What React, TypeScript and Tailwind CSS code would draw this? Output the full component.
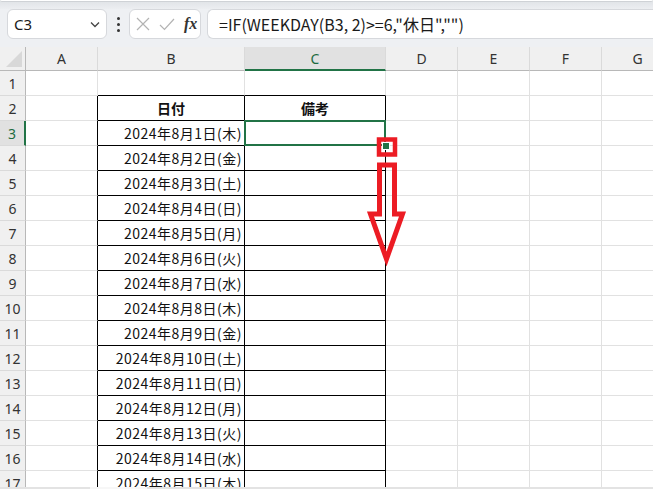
import React from 'react'

const colWidths = [26, 72, 147, 141, 72, 72, 72, 72]
const colNames = ['A', 'B', 'C', 'D', 'E', 'F', 'G']
const weekdays = ['木', '金', '土', '日', '月', '火', '水']

const jp = "font-['Noto_Sans_CJK_JP','Noto_Sans',sans-serif]"

function cellText(r: number, c: number) {
  if (r === 2 && c === 2) return '日付'
  if (r === 2 && c === 3) return '備考'
  if (r >= 3 && c === 2) {
    const d = r - 2
    return `2024年8月${d}日(${weekdays[(d - 1) % 7]})`
  }
  return ''
}

function Cell({ r, c }: { r: number; c: number }) {
  const inTable = r >= 2 && c <= 3
  const bottomBlack = r >= 1 && (c === 2 || c === 3)
  const text = cellText(r, c)
  const isHead = r === 2
  return (
    <div
      className={`relative h-[25px] border-r border-b flex items-center ${jp} text-[14px] text-[#111] ${
        inTable ? 'border-r-black' : 'border-r-[#e1e1e1]'
      } ${bottomBlack ? 'border-b-black' : 'border-b-[#e1e1e1]'} ${
        isHead ? 'justify-center font-bold' : 'justify-end pr-[2px] tracking-[0.5px]'
      } bg-white`}
    >
      <span className="whitespace-nowrap leading-none">{text}</span>
      {r === 3 && c === 3 && (
        <>
          <div className="absolute z-10 -left-px -top-px -right-px -bottom-px border-2 border-[#217346] pointer-events-none" />
          <div className="absolute z-10 right-[-5px] bottom-[-5px] w-[8px] h-[8px] bg-[#217346] border border-white" />
        </>
      )}
    </div>
  )
}

export default function App() {
  const rows = Array.from({ length: 17 }, (_, i) => i + 1)
  return (
    <div className="relative w-[653px] h-[489px] overflow-hidden bg-[#eef0f3]">
      {/* ribbon edge */}
      <div className="h-[9px] bg-gradient-to-b from-[#dfe2e6] to-[#eceef1]">
        <div className="h-[2px] bg-white border-b border-[#cfd2d6] rounded-b-[4px]" />
      </div>

      {/* formula bar */}
      <div className="flex items-stretch h-[30px] pl-[7px]">
        <div className="w-[100px] bg-white border border-[#d6d8dc] rounded-[6px] flex items-center justify-between pl-[6px] pr-[6px]">
          <span className="font-['Noto_Sans',sans-serif] text-[15px] text-[#1a1a1a]">C3</span>
          <svg width="10" height="7" viewBox="0 0 10 7">
            <path d="M1 1.5 L5 5.5 L9 1.5" fill="none" stroke="#444" strokeWidth="1.3" />
          </svg>
        </div>
        <div className="w-[22px] flex flex-col items-center justify-center gap-[3px]">
          <span className="w-[3px] h-[3px] rounded-full bg-[#333]" />
          <span className="w-[3px] h-[3px] rounded-full bg-[#333]" />
          <span className="w-[3px] h-[3px] rounded-full bg-[#333]" />
        </div>
        <div className="w-[72px] bg-white border border-[#d6d8dc] rounded-[6px] flex items-center pl-[6px] gap-[9px]">
          <svg width="14" height="14" viewBox="0 0 14 14">
            <path d="M1 1 L13 13 M13 1 L1 13" stroke="#b3b3b3" strokeWidth="1.2" fill="none" />
          </svg>
          <svg width="16" height="13" viewBox="0 0 16 13">
            <path d="M1 7 L5.5 11.5 L15 1" stroke="#b3b3b3" strokeWidth="1.2" fill="none" />
          </svg>
          <span className="font-['Liberation_Serif',serif] italic font-bold text-[16px] text-[#333] leading-none">
            fx
          </span>
        </div>
        <div className="flex-1 ml-[6px] bg-white border border-[#d6d8dc] border-r-0 rounded-l-[6px] flex items-center pl-[11px]">
          <span className={`${jp} text-[16px] text-[#1a1a1a] whitespace-nowrap`}>
            =IF(WEEKDAY(B3, 2)&gt;=6,"休日","")
          </span>
        </div>
      </div>

      <div className="h-[8px]" />

      {/* grid */}
      <div
        className="grid"
        style={{ gridTemplateColumns: colWidths.map((w) => `${w}px`).join(' ') }}
      >
        {/* header row */}
        <div className="h-[24px] bg-[#f0f0f0] border-r border-b border-r-[#b8b8b8] border-b-[#b8b8b8] flex items-end justify-end p-[3px]">
          <svg width="16" height="16" viewBox="0 0 16 16">
            <path d="M16 0 L16 16 L0 16 Z" fill="#d8d8d8" />
          </svg>
        </div>
        {colNames.map((n) => {
          const sel = n === 'C'
          return (
            <div
              key={n}
              className={`h-[24px] flex items-center justify-center border-r border-r-[#dadada] font-['Noto_Sans',sans-serif] text-[14px] ${
                sel
                  ? 'bg-[#e1e1e1] border-b-2 border-b-[#217346] text-[#1c6b3f]'
                  : 'bg-[#f0f0f0] border-b border-b-[#b8b8b8] text-[#333]'
              }`}
            >
              {n}
            </div>
          )
        })}

        {rows.map((r) => (
          <React.Fragment key={r}>
            <div
              className={`h-[25px] flex items-center justify-center border-b border-b-[#dadada] font-['Noto_Sans',sans-serif] text-[14px] ${
                r === 3
                  ? 'bg-[#e1e1e1] border-r-2 border-r-[#217346] text-[#1c6b3f]'
                  : 'bg-[#f0f0f0] border-r border-r-[#b8b8b8] text-[#333]'
              }`}
            >
              {r}
            </div>
            {colNames.map((_, ci) => (
              <Cell key={ci} r={r} c={ci + 1} />
            ))}
          </React.Fragment>
        ))}
      </div>

      {/* red annotation */}
      <svg className="absolute z-20 left-0 top-0 pointer-events-none" width="653" height="489">
        <rect x="379" y="139.5" width="16" height="15" fill="none" stroke="#ec1c24" strokeWidth="4.5" />
        <polygon
          points="379.5,165 394.5,165 394.5,214 402.5,214 386.5,259 370.5,214 379.5,214"
          fill="none"
          stroke="#ec1c24"
          strokeWidth="5"
          strokeLinejoin="miter"
        />
      </svg>

      {/* scrollbar edge */}
      <div className="absolute z-20 left-0 right-0 bottom-0 h-[2px] bg-[#e3e3e3]">
        <div className="ml-[90px] w-[57px] h-full bg-[#f7f7f7]" />
      </div>
    </div>
  )
}
